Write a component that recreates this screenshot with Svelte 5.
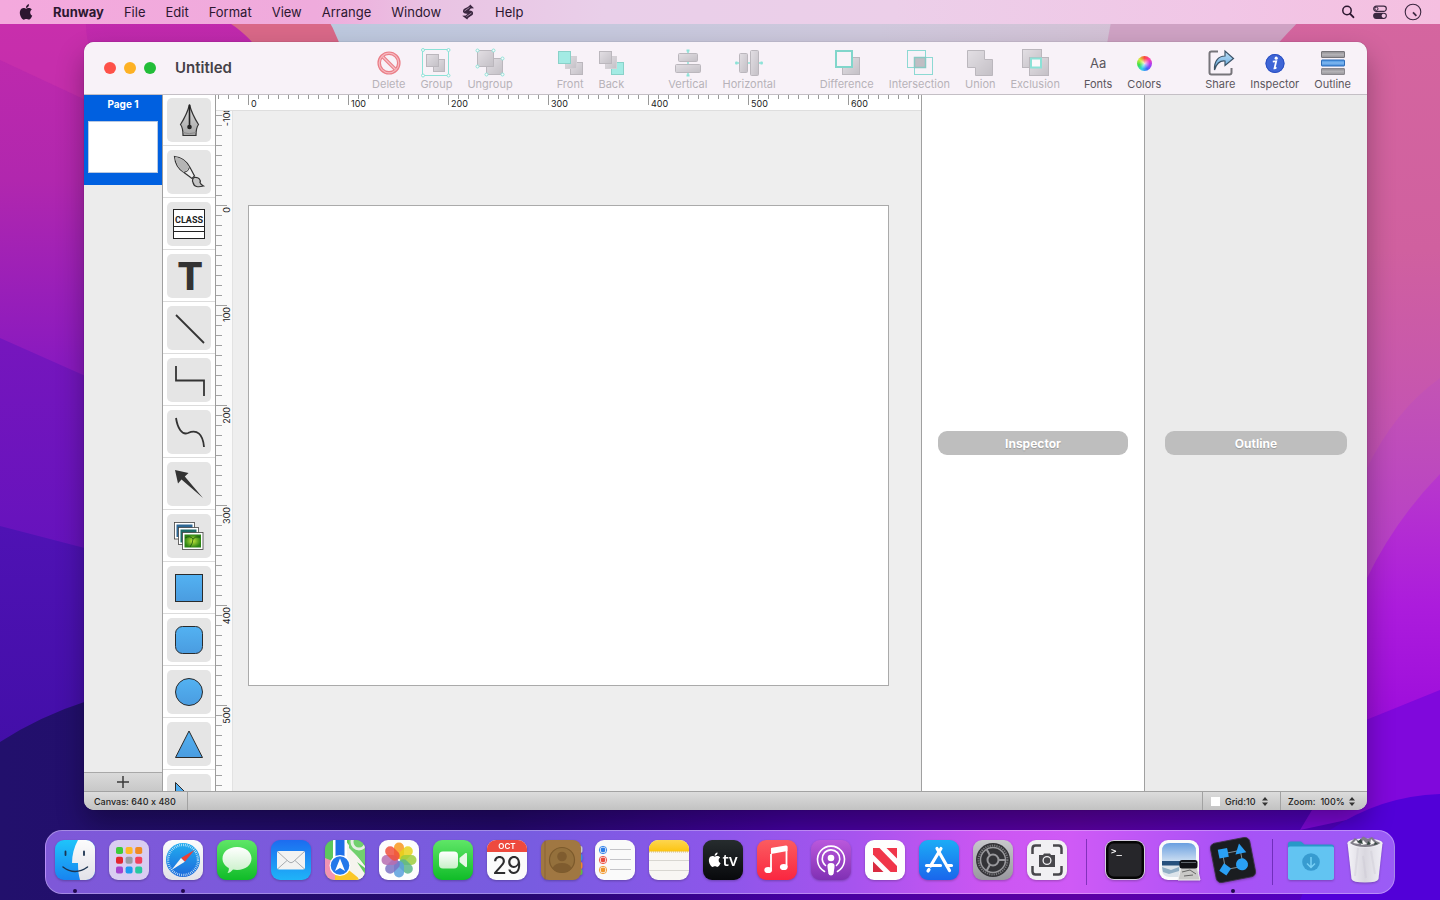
<script>
  const menus = ['File', 'Edit', 'Format', 'View', 'Arrange', 'Window'];

  const toolGroups = [
    { items: ['Delete', 'Group', 'Ungroup'], off: true },
    { items: ['Front', 'Back'], off: true },
    { items: ['Vertical', 'Horizontal'], off: true },
    { items: ['Difference', 'Intersection', 'Union', 'Exclusion'], off: true },
    { items: ['Fonts', 'Colors'], off: false, near: true },
    { items: ['Share', 'Inspector', 'Outline'], off: false }
  ];

  const tools = ['Pen', 'Brush', 'Class', 'Text', 'Line', 'Elbow', 'Curve', 'Arrow', 'Images', 'Rectangle', 'Rounded rectangle', 'Ellipse', 'Triangle', 'Right triangle'];

  let editorWidth = $state(705);
  let editorHeight = $state(680);
  const range = (from, to, step) => Array.from({ length: Math.max(0, Math.floor((to - from) / step) + 1) }, (_, i) => from + i * step);
  const hTicks = $derived(range(-30, editorWidth - 33, 10));
  const hLabels = $derived(range(0, editorWidth - 60, 100));
  const vTicks = $derived(range(-90, editorHeight - 95, 10));
  const vLabels = $derived(range(-100, editorHeight - 120, 100));

  const dock = [
    'Finder', 'Launchpad', 'Safari', 'Messages', 'Mail', 'Maps', 'Photos', 'FaceTime', 'Calendar', 'Contacts',
    'Reminders', 'Notes', 'TV', 'Music', 'Podcasts', 'News', 'App Store', 'System Preferences', 'Screenshot',
    '|', 'Terminal', 'Preview', 'Runway', '|', 'Downloads', 'Trash'
  ];
  const running = ['Finder', 'Safari', 'Runway'];

  const padColors = ['#3ecb3a', '#fdb827', '#f08a24', '#e3262f', '#9a9aa2', '#f2405c', '#a445cf', '#1d9bf0', '#27c8a0'];
  const petals = ['#f8981d', '#e8d21a', '#9ccc3c', '#5cb68a', '#5aa0dc', '#7b73c4', '#b66db0', '#f0503c'];
  const apple = 'M12.152 6.896c-.948 0-2.415-1.078-3.96-1.04-2.04.027-3.91 1.183-4.961 3.014-2.117 3.675-.546 9.103 1.519 12.09 1.013 1.454 2.208 3.09 3.792 3.039 1.52-.065 2.09-.987 3.935-.987 1.831 0 2.35.987 3.96.948 1.637-.026 2.676-1.48 3.676-2.948 1.156-1.688 1.636-3.325 1.662-3.415-.039-.013-3.182-1.221-3.22-4.857-.026-3.04 2.48-4.494 2.597-4.559-1.429-2.09-3.623-2.324-4.39-2.376-2-.156-3.675 1.09-4.61 1.09zM15.53 3.83c.843-1.012 1.4-2.427 1.245-3.83-1.207.052-2.662.805-3.532 1.818-.78.896-1.454 2.338-1.273 3.714 1.338.104 2.715-.688 3.559-1.701';

  let grid = $state(false);
</script>

<div class="desktop">
  <svg class="wallpaper" viewBox="0 0 1440 900" preserveAspectRatio="none" aria-hidden="true">
    <defs>
      <linearGradient id="wl" x1="0" y1="0" x2="0" y2="1">
        <stop offset="0" stop-color="#c32aac" /><stop offset=".2" stop-color="#b127ae" /><stop offset=".4" stop-color="#8a1abf" /><stop offset="1" stop-color="#5a10b8" />
      </linearGradient>
      <linearGradient id="wr" x1="0" y1="0" x2="0" y2="1">
        <stop offset="0" stop-color="#d5669f" /><stop offset=".5" stop-color="#d0609f" /><stop offset=".9" stop-color="#c352b4" /><stop offset="1" stop-color="#b848c0" />
      </linearGradient>
      <linearGradient id="wt" x1="0" y1="0" x2="1" y2="0">
        <stop offset="0" stop-color="#bcc8de" /><stop offset=".5" stop-color="#cfc8dc" /><stop offset="1" stop-color="#d8b8cc" />
      </linearGradient>
      <linearGradient id="wp" x1="0" y1="0" x2="0" y2="1">
        <stop offset="0" stop-color="#7616bd" /><stop offset="1" stop-color="#5a10bc" />
      </linearGradient>
      <linearGradient id="wi" x1="0" y1="0" x2="0" y2="1">
        <stop offset="0" stop-color="#4f12b4" /><stop offset="1" stop-color="#3a0ca0" />
      </linearGradient>
      <linearGradient id="wm" x1="0" y1="0" x2="0" y2="1">
        <stop offset="0" stop-color="#c354b4" /><stop offset=".7" stop-color="#b43acc" /><stop offset="1" stop-color="#ac2ed6" />
      </linearGradient>
      <linearGradient id="wn" x1="0" y1="0" x2="0" y2="1">
        <stop offset="0" stop-color="#b838cc" /><stop offset=".35" stop-color="#ac1cdc" /><stop offset=".6" stop-color="#a010dc" /><stop offset="1" stop-color="#8008e0" />
      </linearGradient>
      <linearGradient id="wb" x1="0" y1="0" x2="1" y2="0">
        <stop offset="0" stop-color="#22106c" /><stop offset=".35" stop-color="#24096e" /><stop offset=".55" stop-color="#4400a0" /><stop offset=".75" stop-color="#5c00a4" /><stop offset="1" stop-color="#4c00d0" />
      </linearGradient>
    </defs>
    <rect width="1440" height="900" fill="url(#wl)" />
    <path d="M0 0H90Q70 60 150 130L0 60Z" fill="#cf34ac" opacity=".5" />
    <path d="M170 0C230 15 250 35 265 60H400L320 0Z" fill="#d96888" />
    <path d="M315 0Q335 25 345 60H1440V0Z" fill="url(#wt)" />
    <path d="M1115 0L1104 60H1440V0Z" fill="#cfa2c4" />
    <path d="M1320 0C1290 30 1270 50 1240 90L1100 500H1440V0Z" fill="url(#wr)" />
    <path d="M0 338L90 378L300 500V700H0Z" fill="url(#wp)" />
    <path d="M0 526L100 552L400 700V900H0Z" fill="url(#wi)" />
    <path d="M1440 378Q1395 410 1366 470L1200 700H1440Z" fill="url(#wm)" />
    <path d="M1440 474Q1395 520 1366 580L1200 850H1440Z" fill="url(#wn)" />
    <path d="M0 742Q40 716 90 700L400 790H1440V900H0Z" fill="url(#wb)" />
    <path d="M1366 720L1440 690V800L1300 830Z" fill="#8008dc" />
    <path d="M1330 830Q1380 796 1440 794V900H1300Z" fill="#5200d8" />
  </svg>

  <nav class="menubar" aria-label="Menu bar">
    <button class="icon-btn" aria-label="Apple">
      <svg width="14" height="16" viewBox="1 0 22 24"><path d={apple} fill="#2c1730" /></svg>
    </button>
    <button class="app">Runway</button>
    {#each menus as m}<button>{m}</button>{/each}
    <button class="icon-btn" aria-label="Scripts">
      <svg width="14" height="16" viewBox="0 0 14 16"><path d="M9.200 .6L13 4.200 9.800 4.400 8 6.400C11.400 6.600 12.600 8 12 9.900 11.400 12 7.800 12.200 6.200 15.400L1.200 11.800 4.800 11.500 6.600 9.700C2.800 9.700 1.400 8.200 2.200 6.200 3 4 7.200 4 9.200 .6Z" fill="#3b2740" /><path d="M3.500 7L8.500 3.500M5.500 12.500L10.500 9" stroke="#e6c6e4" stroke-width=".6" fill="none" /></svg>
    </button>
    <button>Help</button>
    <span class="grow"></span>
    <div class="extras">
      <button class="icon-btn" aria-label="Search">
        <svg width="16" height="16" viewBox="0 0 16 16" fill="none" stroke="#2c1730" stroke-linecap="round"><circle cx="7" cy="6.500" r="4.200" stroke-width="1.500" /><path d="M10.200 9.800L13.400 13.200" stroke-width="1.900" /></svg>
      </button>
      <button class="icon-btn" aria-label="Control Center">
        <svg width="16" height="16" viewBox="0 0 16 16"><rect x="1.700" y="2.200" width="12.600" height="5.200" rx="2.600" fill="none" stroke="#3b2740" stroke-width="1.200" /><circle cx="4.400" cy="4.800" r="1.600" fill="none" stroke="#3b2740" /><rect x="1.100" y="8.700" width="13.800" height="6.200" rx="3.100" fill="#3b2740" /><circle cx="11.700" cy="11.800" r="2.100" fill="#f0c6e4" /></svg>
      </button>
      <button class="icon-btn" aria-label="Clock">
        <svg width="18" height="18" viewBox="0 0 18 18" fill="none" stroke="#3b2740"><circle cx="9" cy="9" r="7.800" stroke-width="1.100" /><path d="M9 9.300L12.400 12.800" stroke-width="1.700" /></svg>
      </button>
    </div>
  </nav>

  <main class="window">
    <header class="titlebar">
      <div class="lights">
        <button class="red" aria-label="Close"></button>
        <button class="yellow" aria-label="Minimize"></button>
        <button class="green" aria-label="Zoom window"></button>
      </div>
      <h1>Untitled</h1>
      <div class="toolbar">
        {#each toolGroups as g}
          <div class="group" class:near={g.near}>
            {#each g.items as t}
              <button class="tool" disabled={g.off}>
                {#if t === 'Fonts'}
                  <span class="aa">Aa</span>
                {:else if t === 'Colors'}
                  <span class="wheel"><i></i></span>
                {:else}
                  <svg width="30" height="30" viewBox="0 0 30 30" fill="none">
                    {#if t === 'Delete'}
                      <circle cx="15" cy="15" r="9.800" stroke="#e0202c" stroke-width="3.600" /><path d="M8.500 8.500L21.500 21.500" stroke="#e0202c" stroke-width="3.600" /><path d="M8.500 8.500L21.500 21.500" stroke="#f59aa0" stroke-width="1.200" /><circle cx="15" cy="15" r="9.800" stroke="#f58c94" stroke-width="1.200" />
                    {:else if t === 'Group'}
                      <rect x="1.500" y="1.500" width="26" height="26" stroke="#35d5bd" /><g fill="url(#gg)" stroke="#8b888e"><rect x="12.500" y="11.500" width="11" height="12" /><rect x="5.500" y="6.500" width="12" height="12" /></g>
                      <g fill="#fff" stroke="#35d5bd"><circle cx="2" cy="2" r="1.500" /><circle cx="27.500" cy="2" r="1.500" /><circle cx="2" cy="27.500" r="1.500" /><circle cx="27.500" cy="27.500" r="1.500" /></g>
                    {:else if t === 'Ungroup'}
                      <g fill="url(#gg)" stroke="#8b888e"><rect x="11.500" y="10.500" width="16" height="16" /><rect x="2.500" y="2.500" width="16" height="16" /></g>
                      <g fill="#fff" stroke="#35d5bd"><circle cx="2.500" cy="2.500" r="1.500" /><circle cx="18.500" cy="2.500" r="1.500" /><circle cx="2.500" cy="18.500" r="1.500" /><circle cx="27.500" cy="10.500" r="1.500" /><circle cx="27.500" cy="26.500" r="1.500" /><circle cx="11.500" cy="26.500" r="1.500" /></g>
                    {:else if t === 'Front'}
                      <g stroke="#8b888e" fill="url(#gg)"><rect x="15.500" y="14.500" width="12" height="12" /><rect x="10.500" y="8.500" width="11" height="12" stroke="#b8b5ba" /></g><rect x="3.500" y="3.500" width="12" height="12" fill="#5ee6d4" stroke="#2fb8a4" />
                    {:else if t === 'Back'}
                      <rect x="15.500" y="14.500" width="12" height="12" fill="#5ee6d4" stroke="#2fb8a4" /><g stroke="#8b888e" fill="url(#gg)"><rect x="9.500" y="8.500" width="11" height="12" stroke="#b8b5ba" /><rect x="3.500" y="3.500" width="12" height="12" /></g>
                    {:else if t === 'Vertical'}
                      <path d="M15 2V28" stroke="#35d5bd" stroke-width="1.500" /><path d="M13.500 2.500h3M13.500 27.500h3" stroke="#35d5bd" stroke-width="2" /><g fill="url(#gg)" stroke="#8b888e"><rect x="5.500" y="5.500" width="19" height="8" rx="1" /><rect x="2.500" y="16.500" width="25" height="8" rx="1" /></g>
                    {:else if t === 'Horizontal'}
                      <path d="M1 15H29" stroke="#35d5bd" stroke-width="1.500" /><path d="M2.500 13.500v3M27.500 13.500v3" stroke="#35d5bd" stroke-width="2" /><g fill="url(#gg)" stroke="#8b888e"><rect x="5.500" y="5.500" width="8" height="19" rx="1" /><rect x="16.500" y="2.500" width="8" height="25" rx="1" /></g>
                    {:else if t === 'Difference'}
                      <rect x="10.500" y="9.500" width="17" height="17" fill="url(#gg)" stroke="#8b888e" /><rect x="4" y="3" width="16" height="16" fill="#f8f4f8" stroke="#20c0a8" stroke-width="2" />
                    {:else if t === 'Intersection'}
                      <rect x="3.500" y="2.500" width="18" height="17" stroke="#35c5b5" /><rect x="10.500" y="9.500" width="18" height="17" stroke="#35c5b5" /><rect x="10.500" y="9.500" width="11" height="10" fill="#94949a" stroke="#2fa898" stroke-width="1.500" />
                    {:else if t === 'Union'}
                      <path d="M2.500 2.500H19.500V11.500H27.500V27.500H10.500V19.500H2.500Z" fill="url(#gg)" stroke="#8b888e" />
                    {:else if t === 'Exclusion'}
                      <rect x="2.500" y="1.500" width="19" height="18" fill="url(#gg)" stroke="#8b888e" /><rect x="9.500" y="9.500" width="19" height="18" fill="url(#gg)" stroke="#8b888e" /><rect x="11" y="10.500" width="10" height="9" fill="#fff" stroke="#35d5bd" stroke-width="2" />
                    {:else if t === 'Share'}
                      <path d="M13 3.500H6.500Q4.500 3.500 4.500 5.500V24.500Q4.500 26.500 6.500 26.500H24.500Q26.500 26.500 26.500 24.500V20" stroke="#77757a" stroke-width="2" /><path d="M9.500 22C9 12.500 14 8 20 8V3L28.500 10.500 20 17.500V13C15 12.500 11.500 15.500 9.500 22Z" fill="url(#gb)" stroke="#3d5468" stroke-width="1.200" />
                    {:else if t === 'Inspector'}
                      <circle cx="15" cy="15.500" r="9.500" fill="#3f66d6" /><circle cx="15" cy="15.500" r="9" stroke="#2b4fc0" /><circle cx="16.200" cy="10.200" r="1.600" fill="#fff" /><path d="M12.800 13.600L16.200 13.200 14.500 20.300Q15.300 20.300 16.400 19.300" stroke="#fff" stroke-width="1.800" />
                    {:else}
                      <rect x="3.500" y="3.500" width="23" height="6" rx=".5" fill="url(#gd)" stroke="#77757a" /><rect x="3.500" y="12" width="23" height="6" rx=".5" fill="url(#gc)" stroke="#2f6cb8" /><rect x="3.500" y="20.500" width="23" height="6" rx=".5" fill="url(#gd)" stroke="#8b888e" />
                    {/if}
                  </svg>
                {/if}
                <span class="cap">{t}</span>
              </button>
            {/each}
          </div>
        {/each}
      </div>
    </header>

    <div class="body">
      <section class="pages" aria-label="Pages">
        <button class="page-item">
          <span>Page 1</span>
          <span class="thumb"></span>
        </button>
        <button class="add" aria-label="Add page">
          <svg width="12" height="12" viewBox="0 0 12 12"><path d="M6 0V12M0 6H12" stroke="#3a3a3a" stroke-width="1.500" /></svg>
        </button>
      </section>

      <ul class="toolbox" aria-label="Tools">
        {#each tools as t}
          <li>
            <button aria-label={t}>
              <svg width="44" height="44" viewBox="0 0 44 44" fill="none">
                {#if t === 'Pen'}
                  <path d="M22.500 6.500C24.500 15 28 21 31.500 26.500 29.200 29.500 29 33 29 37.500H16C16 33 15.800 29.500 13.500 26.500 17 21 20.500 15 22.500 6.500Z" fill="url(#gp)" stroke="#333" stroke-width="1.200" /><path d="M22.500 7V28" stroke="#222" stroke-width="1.600" /><circle cx="22.500" cy="29" r="2.300" fill="#222" /><path d="M16 34.500Q22 37 29 34.500" stroke="#888" />
                {:else if t === 'Brush'}
                  <path d="M7.500 6.500C15 7 20 12 23 17.500L27.500 26 25 28.500 17 22.500C11 19 8 13 7.500 6.500Z" fill="#ededed" stroke="#333" stroke-width="1.200" /><path d="M8 7C15 8 19 12 22.500 17.500L17 22.500C11 18 9 13 8 7Z" fill="#b5b5b5" /><path d="M22.500 17.500Q21.500 21.500 17 22.500" stroke="#333" /><path d="M27.500 27.500C32 27 34 30 33 32.500 34 35 35.500 35.500 36.500 36 31 37.500 27 37 26 32.500 25 31 25.500 28 27.500 27.500Z" fill="#c4c4c4" stroke="#333" stroke-width="1.200" />
                {:else if t === 'Class'}
                  <rect x="6.500" y="7.500" width="31" height="29" fill="#fff" stroke="#222" /><path d="M6 24.500H38M6 29.500H38" stroke="#222" /><text x="22" y="21" class="cls">CLASS</text>
                {:else if t === 'Text'}
                  <text x="23" y="36" class="bigt">T</text>
                {:else if t === 'Line'}
                  <path d="M9 9L37 37" stroke="#333" stroke-width="1.800" />
                {:else if t === 'Elbow'}
                  <path d="M9 8V22.500H37V38" stroke="#333" stroke-width="1.800" />
                {:else if t === 'Curve'}
                  <path d="M9 8C10.500 18 15 25.500 21 23 30 19 36 24 37 37" stroke="#333" stroke-width="1.800" />
                {:else if t === 'Arrow'}
                  <path d="M8 8L21.500 11 17.800 14.400 36 36 14.500 17.600 11 21.500Z" fill="#333" />
                {:else if t === 'Images'}
                  <g stroke="#444" stroke-width=".8" fill="#fff"><rect x="7.500" y="8.500" width="20" height="16.500" /></g><rect x="9.500" y="10.500" width="16" height="12.500" fill="#2d6794" />
                  <rect x="11.500" y="13.500" width="20" height="17" stroke="#444" stroke-width=".8" fill="#fff" /><rect x="13.500" y="15.500" width="16" height="13" fill="#1d6a68" />
                  <rect x="15.500" y="18.500" width="20.500" height="17" stroke="#444" stroke-width=".8" fill="#fff" /><rect x="17.500" y="20.500" width="16.500" height="13" fill="url(#gl)" /><path d="M18 24Q23 21 26 25 28 22 33 23M23 33Q26 29 26 25" stroke="#1c5210" stroke-width=".8" />
                {:else if t === 'Rectangle'}
                  <rect x="8.500" y="8.500" width="27" height="27" fill="url(#gs)" stroke="#2b2b2b" />
                {:else if t === 'Rounded rectangle'}
                  <rect x="8.500" y="8.500" width="27" height="27" rx="7" fill="url(#gs)" stroke="#2b2b2b" />
                {:else if t === 'Ellipse'}
                  <circle cx="22" cy="22" r="13.500" fill="url(#gs)" stroke="#2b2b2b" />
                {:else if t === 'Triangle'}
                  <path d="M22 9L35.500 35.500H8.500Z" fill="url(#gs)" stroke="#2b2b2b" />
                {:else}
                  <path d="M8.500 8.500L35.500 35.500H8.500Z" fill="url(#gs)" stroke="#2b2b2b" />
                {/if}
              </svg>
            </button>
          </li>
        {/each}
      </ul>

      <section class="editor" aria-label="Canvas" bind:clientWidth={editorWidth}>
        <svg class="ruler-h" aria-hidden="true">
          {#each hTicks as v}
            <rect x={v + 32} y="0" width="1" height={v % 100 === 0 ? 10 : 4} fill="#999" />
          {/each}
          {#each hLabels as v}<text x={v + 35} y="12">{v}</text>{/each}
        </svg>
        <div class="lower" bind:clientHeight={editorHeight}>
          <svg class="ruler-v" aria-hidden="true">
            {#each vTicks as v}
              <rect x="0" y={v + 94} width={v % 100 === 0 ? 11 : 6} height="1" fill="#a2a2a2" />
            {/each}
            {#each vLabels as v}
              <text transform={`translate(14 ${v + 96}) rotate(-90)`} text-anchor="end">{v}</text>
            {/each}
          </svg>
          <div class="scroll"><div class="sheet"></div></div>
        </div>
      </section>

      <aside class="panel inspector"><button>Inspector</button></aside>
      <aside class="panel outline"><button>Outline</button></aside>
    </div>

    <footer class="status">
      <span class="info">Canvas: 640 x 480</span>
      <span class="grow"></span>
      <div class="cell">
        <input id="grid" type="checkbox" bind:checked={grid} />
        <label for="grid">Grid:</label>
        <select aria-label="Grid size"><option>10</option><option>20</option></select>
        <svg width="6" height="9" viewBox="0 0 6 9"><path d="M3 0L6 3.500H0ZM3 9L6 5.500H0Z" fill="#333" /></svg>
      </div>
      <div class="cell zoom">
        <label for="zoom">Zoom:</label>
        <select id="zoom"><option>100%</option><option>75%</option></select>
        <svg width="6" height="9" viewBox="0 0 6 9"><path d="M3 0L6 3.500H0ZM3 9L6 5.500H0Z" fill="#333" /></svg>
      </div>
    </footer>
  </main>

  <nav class="dock" aria-label="Dock">
    {#each dock as d}
      {#if d === '|'}
        <span class="sep"></span>
      {:else}
        <button aria-label={d} class:running={running.includes(d)}>
          <svg width="48" height="48" viewBox="0 0 48 48" fill="none">
            {#if d === 'Finder'}
              <rect x="4" y="4" width="40" height="40" rx="9" fill="url(#fl)" /><path d="M27 4C23 11 21 19 21 27H27C27 33 27.500 39 29 44H35A9 9 0 0 0 44 35V13A9 9 0 0 0 35 4Z" fill="url(#fw)" /><path d="M14.500 15.500V19M33 15.500V19" stroke="#1c3450" stroke-width="1.800" stroke-linecap="round" /><path d="M12 31Q24 40 36.500 31" stroke="#1c3450" stroke-width="1.500" stroke-linecap="round" />
            {:else if d === 'Launchpad'}
              <rect x="4" y="4" width="40" height="40" rx="9" fill="#d9cdf1" />
              {#each padColors as c, i}<rect x={11 + (i % 3) * 9.6} y={11 + Math.floor(i / 3) * 9.8} width="7" height="7" rx="1.800" fill={c} />{/each}
            {:else if d === 'Safari'}
              <rect x="4" y="4" width="40" height="40" rx="9" fill="url(#fw)" /><circle cx="24" cy="24" r="17" fill="url(#sf)" /><circle cx="24" cy="24" r="15" stroke="#d8edfb" stroke-width="2.400" stroke-dasharray=".7 1.200" /><path d="M35.500 14L25.800 25.800 22 22Z" fill="#ee4034" /><path d="M12.500 34L22 22 25.800 25.800Z" fill="#f4f4f4" />
            {:else if d === 'Messages'}
              <rect x="4" y="4" width="40" height="40" rx="9" fill="url(#gr)" /><path d="M24 11C32.500 11 38.500 16 38.500 22.500S32.500 34 24 34C22.500 34 21.500 33.800 20 33.500 18.500 35.500 16.500 36.800 14.500 37 15.500 35.500 16 34 15.800 32 12 30 9.500 26.500 9.500 22.500 9.500 16 15.500 11 24 11Z" fill="url(#wg)" />
            {:else if d === 'Mail'}
              <rect x="4" y="4" width="40" height="40" rx="9" fill="url(#ml)" /><rect x="10" y="15" width="28" height="18.500" rx="2" fill="#f2f2f2" /><path d="M10.500 15.500L22 26Q24 27.500 26 26L37.500 15.500M10.500 33L20 24.500M37.500 33L28 24.500" stroke="#a0a4a8" stroke-width=".9" />
            {:else if d === 'Maps'}
              <rect x="4" y="4" width="40" height="40" rx="9" fill="#5cc85c" /><g clip-path="url(#rr)"><path d="M24 4L44 30V44H30L22 28Z" fill="#f6f4ee" /><path d="M28 4V12L44 28V4Z" fill="#72d06e" /><circle cx="38" cy="6" r="7" stroke="#e6efe4" stroke-width="3" /><path d="M4 22L14 26V44H4Z" fill="#f293b2" /><path d="M14 30H32L38 44H14Z" fill="#fbc728" /><path d="M12 4H26V32H12Z" fill="#fff" /><path d="M14.500 4H23.500V28H14.500Z" fill="#1d6fe8" /><path d="M26 24L44 38V44H40L24 31Z" fill="#f6f4ee" /><path d="M36 26L44 32V38Z" fill="#62c860" /></g><circle cx="19" cy="29.500" r="10.500" fill="#fff" /><circle cx="19" cy="29.500" r="9.300" fill="#2478ea" /><path d="M19 22.500L24 35 19 32 14 35Z" fill="#fff" />
            {:else if d === 'Photos'}
              <rect x="4" y="4" width="40" height="40" rx="9" fill="#fdfdfd" />
              {#each petals as c, i}<rect x="19" y="6.500" width="10" height="16.500" rx="5" fill={c} opacity=".85" transform={`rotate(${i * 45} 24 24)`} />{/each}
            {:else if d === 'FaceTime'}
              <rect x="4" y="4" width="40" height="40" rx="9" fill="url(#gr)" /><rect x="10" y="15.500" width="19" height="17" rx="4" fill="url(#wg)" /><path d="M30.500 22L36.500 17Q38 16.500 38 18V30Q38 31.500 36.500 31L30.500 26Z" fill="#e6f8e6" />
            {:else if d === 'Calendar'}
              <rect x="4" y="4" width="40" height="40" rx="9" fill="#fbfbfb" /><path d="M4 16V13A9 9 0 0 1 13 4H35A9 9 0 0 1 44 13V16Z" fill="#ee4a3e" /><text x="24" y="13" class="oct">OCT</text><text x="24" y="38" class="day">29</text>
            {:else if d === 'Contacts'}
              <g><rect x="38" y="10" width="7.500" height="7" rx="2" fill="#c8c8c8" /><rect x="38" y="18" width="7.500" height="7" rx="2" fill="#3b8fe0" /><rect x="38" y="26" width="7.500" height="7" rx="2" fill="#f0862a" /><rect x="38" y="33" width="7.500" height="6" rx="2" fill="#5dbb46" /></g><rect x="4" y="4" width="40" height="40" rx="8" fill="#a07742" /><path d="M8 4.500V43.500" stroke="#8a6434" /><circle cx="25" cy="24" r="12.500" stroke="#7c5a2c" stroke-width="1.200" fill="#94703c" /><circle cx="25" cy="20.500" r="4.800" fill="#7f5c2f" /><path d="M15.500 32Q18 27 25 27T34.500 32Q31 36.500 25 36.500T15.500 32Z" fill="#7f5c2f" />
            {:else if d === 'Reminders'}
              <rect x="4" y="4" width="40" height="40" rx="9" fill="#fafafa" />
              {#each ['#2b7de8', '#ea4b3c', '#f0962a'] as c, i}<circle cx="12" cy={14 + i * 10} r="3.700" stroke={c} stroke-width=".9" /><circle cx="12" cy={14 + i * 10} r="2.400" fill={c} /><path d={`M19 ${13.5 + i * 10}H40`} stroke="#c4c4c8" />{/each}
            {:else if d === 'Notes'}
              <rect x="4" y="4" width="40" height="40" rx="9" fill="#f8f6f3" /><path d="M4 15.500V13A9 9 0 0 1 13 4H35A9 9 0 0 1 44 13V15.500Z" fill="url(#yl)" /><path d="M4 16H44" stroke="#b99a50" stroke-dasharray=".8 1.200" stroke-width=".8" /><path d="M4 24.500H44M4 34.500H44" stroke="#d8d6d1" />
            {:else if d === 'TV'}
              <rect x="4" y="4" width="40" height="40" rx="9" fill="url(#bk)" /><g transform="translate(8.500 16.500) scale(.6)"><path d={apple} fill="#fff" /></g><text x="31" y="30" class="tv">tv</text>
            {:else if d === 'Music'}
              <rect x="4" y="4" width="40" height="40" rx="9" fill="url(#mu)" /><path d="M18 15L33.500 11.500V31" stroke="#fff" stroke-width="1.800" /><path d="M18 33V12.500Q18 12 19 11.800L33 9.500Q34.400 9.300 34.400 11V15L18 18Z" fill="#fff" /><path d="M18 18V33" stroke="#fff" stroke-width="1.800" /><ellipse cx="15.200" cy="34" rx="3.900" ry="3.100" fill="#fff" /><ellipse cx="30.800" cy="31" rx="3.900" ry="3.100" fill="#fff" />
            {:else if d === 'Podcasts'}
              <rect x="4" y="4" width="40" height="40" rx="9" fill="url(#po)" /><g stroke="#fff" stroke-width="1.600" stroke-linecap="round"><path d="M17.500 35.500A13.500 13.500 0 1 1 30.500 35.500" /><path d="M18.500 29.500A8.800 8.800 0 1 1 29.500 29.500" /></g><circle cx="24" cy="22" r="3.300" fill="#fff" /><path d="M24 27C27 27 27.800 28.500 27.500 31L26.600 37.500Q26.200 39.500 24 39.500T21.400 37.500L20.500 31C20.200 28.500 21 27 24 27Z" fill="#fff" />
            {:else if d === 'News'}
              <rect x="4" y="4" width="40" height="40" rx="9" fill="#fefefe" /><path d="M12 12H18.500L36 30V36H29.500L12 18.500Z" fill="#f0364a" /><path d="M25.500 12H36V22.500Z" fill="#f0364a" /><path d="M12 25.500V36H22.500Z" fill="#d92a40" />
            {:else if d === 'App Store'}
              <rect x="4" y="4" width="40" height="40" rx="9" fill="url(#as)" /><g stroke="#fff" stroke-width="3.200" stroke-linecap="round"><path d="M26 12.500L15.500 30M22 12.500L34.500 34.500M11.500 29.500H25.500M31.500 29.500H36.500M14 33.500L13 35" /></g>
            {:else if d === 'System Preferences'}
              <rect x="4" y="4" width="40" height="40" rx="9" fill="url(#sp)" /><circle cx="24" cy="24" r="17" fill="#333337" /><circle cx="24" cy="24" r="14.500" stroke="#77777b" stroke-width="2" stroke-dasharray="1.300 1" /><circle cx="24" cy="24" r="12.500" stroke="#98989c" stroke-width="1.500" /><circle cx="24" cy="24" r="5.500" stroke="#98989c" stroke-width="2" /><path d="M29.500 24H37M21 19.500L17.500 13M21 28.500L17.500 35" stroke="#98989c" stroke-width="2" />
            {:else if d === 'Screenshot'}
              <rect x="4" y="4" width="40" height="40" rx="9" fill="#f1f0f3" /><path d="M9.500 18V12.500Q9.500 9.500 12.500 9.500H18M30 9.500H35.500Q38.500 9.500 38.500 12.500V18M38.500 30V35.500Q38.500 38.500 35.500 38.500H30M18 38.500H12.500Q9.500 38.500 9.500 35.500V30" stroke="#48474c" stroke-width="2.500" /><path d="M16 19H20L21 17.500H27L28 19H32V31H16Z" fill="#48474c" /><circle cx="24" cy="24.500" r="3.900" fill="#48474c" stroke="#f1f0f3" stroke-width="1.300" />
            {:else if d === 'Terminal'}
              <rect x="4" y="4" width="40" height="40" rx="9" fill="#d4cede" /><rect x="5" y="5" width="38" height="38" rx="8" fill="#050505" /><rect x="7.500" y="7.500" width="33" height="33" rx="5" fill="#26262a" /><text x="10" y="18" class="term">&gt;_</text>
            {:else if d === 'Preview'}
              <rect x="4" y="4" width="40" height="40" rx="9" fill="#fbfbfb" /><path d="M7 15Q7 7 15 7H33Q41 7 41 15V26H7Z" fill="url(#sk)" /><path d="M7 25H41V30H7Z" fill="#26507c" /><path d="M7 29.500H41V33Q41 41 33 41H15Q7 41 7 33Z" fill="#dce4ea" /><path d="M7 31L16 34 24 31V35L14 38 8 36Z" fill="#90aec4" /><path d="M26 31H42L45 44H23Z" fill="#c9c9c7" stroke="#efefef" /><path d="M27 36L35 34 41 38M29 40L38 39" stroke="#666" /><rect x="24.500" y="24" width="18" height="8.500" rx="2.500" fill="#101216" /><path d="M26 26.500H41" stroke="#5f666c" />
            {:else if d === 'Runway'}
              <g transform="rotate(-11 24 24)"><rect x="4" y="4" width="40" height="40" rx="5" fill="#1a1d20" stroke="#3a3144" stroke-width=".8" /><path d="M15 16L33 16 33 32 15 32Z" stroke="#7a8a94" /><rect x="11" y="11" width="9.500" height="9" fill="#2aa0f4" /><path d="M33 9L38.500 19H27.500Z" fill="#2aa0f4" /><path d="M14.500 25.500L20.500 32 14.500 38 8.500 32Z" fill="#2aa0f4" /><circle cx="32" cy="30" r="6" fill="#2aa0f4" /></g>
            {:else if d === 'Downloads'}
              <path d="M1 8Q1 5.500 3.500 5.500H14L17.500 8.500H44.500Q47 8.500 47 11V20H1Z" fill="#2898c8" /><path d="M1 12Q1 10.500 3 10.500H45Q47 10.500 47 12V41.500Q47 44 44.500 44H3.500Q1 44 1 41.500Z" fill="#62c4f2" /><circle cx="24" cy="26" r="8.800" fill="#379bd0" /><path d="M24 21V31M20 27.500L24 31.500 28 27.500" stroke="#77d0f6" stroke-width="1.500" />
            {:else}
              <path d="M6.500 7H41.500L37.500 43Q36.500 46.500 24 46.500T10.500 43Z" fill="url(#tr)" /><path d="M17 12L14 40M30 15L34 38M22 20L25 42" stroke="#c8c6d0" stroke-width="2" opacity=".35" /><ellipse cx="24" cy="7" rx="17.500" ry="4.500" fill="#efeef4" /><path d="M9 7L14 2 18 5 22 0.500 27 3 31 1 35 5 39.500 7Q34 11 24 11T9 7Z" fill="#807d88" /><path d="M12 7L15 4 18 8ZM22 4L26 8 20 9ZM30 3L34 7 29 9Z" fill="#f7f7f7" /><path d="M16 6L20 3 22 8ZM27 5L30 8 26 9ZM34 6L37 8 33 9Z" fill="#33463f" />
            {/if}
          </svg>
        </button>
      {/if}
    {/each}
  </nav>

  <svg class="defs" aria-hidden="true">
    <defs>
      <linearGradient id="gg" x1="0" y1="0" x2="1" y2="1"><stop stop-color="#d2d0d4" /><stop offset="1" stop-color="#9a989e" /></linearGradient>
      <linearGradient id="gb" x1="0" y1="0" x2="0" y2="1"><stop stop-color="#c0e2f8" /><stop offset="1" stop-color="#5aa2da" /></linearGradient>
      <linearGradient id="gc" x1="0" y1="0" x2="0" y2="1"><stop stop-color="#3f8ee0" /><stop offset=".5" stop-color="#82b8f0" /><stop offset="1" stop-color="#3f88da" /></linearGradient>
      <linearGradient id="gd" x1="0" y1="0" x2="0" y2="1"><stop stop-color="#8d8b90" /><stop offset=".5" stop-color="#b4b2b6" /><stop offset="1" stop-color="#97959a" /></linearGradient>
      <linearGradient id="gp" x1="0" y1="0" x2="0" y2="1"><stop stop-color="#dedede" /><stop offset="1" stop-color="#a4a4a4" /></linearGradient>
      <linearGradient id="gs" x1="0" y1="0" x2="0" y2="1"><stop stop-color="#53b2f2" /><stop offset="1" stop-color="#4a9ce0" /></linearGradient>
      <radialGradient id="gl"><stop stop-color="#c4e83c" /><stop offset="1" stop-color="#2c8414" /></radialGradient>
      <linearGradient id="fl" x1="0" y1="0" x2="0" y2="1"><stop stop-color="#1fc4fa" /><stop offset="1" stop-color="#1884f0" /></linearGradient>
      <linearGradient id="fw" x1="0" y1="0" x2="0" y2="1"><stop stop-color="#fcfcfc" /><stop offset="1" stop-color="#e2e2e8" /></linearGradient>
      <linearGradient id="sf" x1="0" y1="0" x2="0" y2="1"><stop stop-color="#22aef0" /><stop offset="1" stop-color="#1c68da" /></linearGradient>
      <linearGradient id="gr" x1="0" y1="0" x2="0" y2="1"><stop stop-color="#5fe667" /><stop offset="1" stop-color="#10bc28" /></linearGradient>
      <linearGradient id="wg" x1="0" y1="0" x2="0" y2="1"><stop stop-color="#fff" /><stop offset="1" stop-color="#c8f0c8" /></linearGradient>
      <linearGradient id="ml" x1="0" y1="0" x2="0" y2="1"><stop stop-color="#1c6cf0" /><stop offset="1" stop-color="#1fb4f8" /></linearGradient>
      <linearGradient id="yl" x1="0" y1="0" x2="0" y2="1"><stop stop-color="#fdd650" /><stop offset="1" stop-color="#fcc410" /></linearGradient>
      <linearGradient id="bk" x1="0" y1="0" x2="0" y2="1"><stop stop-color="#262c2e" /><stop offset="1" stop-color="#08090c" /></linearGradient>
      <linearGradient id="mu" x1="0" y1="0" x2="0" y2="1"><stop stop-color="#fb5c60" /><stop offset="1" stop-color="#fa2640" /></linearGradient>
      <linearGradient id="po" x1="0" y1="0" x2="0" y2="1"><stop stop-color="#ba58dc" /><stop offset="1" stop-color="#8030b4" /></linearGradient>
      <linearGradient id="as" x1="0" y1="0" x2="0" y2="1"><stop stop-color="#1cacf6" /><stop offset="1" stop-color="#1a66ec" /></linearGradient>
      <linearGradient id="sp" x1="0" y1="0" x2="0" y2="1"><stop stop-color="#c8c8cc" /><stop offset="1" stop-color="#98989e" /></linearGradient>
      <linearGradient id="sk" x1="0" y1="0" x2="0" y2="1"><stop stop-color="#6a9fe0" /><stop offset="1" stop-color="#cfe0f2" /></linearGradient>
      <linearGradient id="tr" x1="0" y1="0" x2="1" y2="0"><stop stop-color="#f4f3f8" /><stop offset=".5" stop-color="#d9d7df" /><stop offset="1" stop-color="#f0eff5" /></linearGradient>
      <clipPath id="rr"><rect x="4" y="4" width="40" height="40" rx="9" /></clipPath>
    </defs>
  </svg>
</div>

<style>
  :global(body) { overflow: hidden; }
  button, select, input { font: inherit; color: inherit; border: 0; padding: 0; margin: 0; background: none; }
  svg { display: block; }
  .grow { flex: 1; }
  .defs { position: absolute; width: 0; height: 0; }
  .desktop {
    position: relative; isolation: isolate; box-sizing: border-box; height: 100vh; padding-bottom: 6px;
    display: flex; flex-direction: column; font-family: Inter, "Liberation Sans", sans-serif; font-feature-settings: "calt" 0;
  }
  .wallpaper { position: absolute; inset: 0; width: 100%; height: 100%; z-index: -1; }

  .menubar {
    display: flex; align-items: center; gap: 20px; height: 24px; flex: none; padding: 0 18px 0 19px; font-size: 13px; color: #2c1730;
    background: linear-gradient(90deg, #f4a9dd, #efabdc 22%, #e9c3e3 30%, #e9cfe9 42%, #eccfe9 62%, #f1c6e6 85%, #f5bfe0);
  }
  .app { font-weight: 700; }
  .extras { display: flex; align-items: center; gap: 16px; }

  .window {
    flex: 1; min-height: 0; display: flex; flex-direction: column; margin: 18px 73px 20px 84px;
    border-radius: 10px; overflow: hidden; background: #ececec;
    box-shadow: 0 0 1px rgba(0, 0, 0, .5), 0 14px 28px rgba(0, 0, 0, .32);
  }
  .titlebar {
    display: flex; align-items: center; flex: none; height: 52px; padding: 0 16px 0 20px;
    background: #f8f2f8; border-bottom: 1px solid #c4bfc5;
  }
  .lights { display: flex; gap: 8px; }
  .lights button { width: 12px; height: 12px; border-radius: 50%; }
  .red { background: #fe5149; }
  .yellow { background: #fdb124; }
  .green { background: #22bd38; }
  h1 { flex: 1; margin: 0 0 0 19px; font-size: 15px; line-height: 18px; font-weight: 600; color: #454147; }
  .toolbar { display: flex; gap: 44px; padding-top: 2px; }
  .group { display: flex; gap: 15px; }
  .near { margin-left: -20px; }
  .tool { display: flex; flex-direction: column; align-items: center; font-size: 11px; line-height: 12px; color: #5b565d; }
  .tool svg { margin: 0 -4px; }
  .tool:disabled { color: #b7b2b9; }
  .tool:disabled svg { opacity: .55; }
  .aa { height: 30px; line-height: 30px; font-size: 13px; }
  .wheel { height: 30px; display: flex; align-items: center; }
  .wheel i { width: 15px; height: 15px; border-radius: 50%; background: radial-gradient(rgba(255, 255, 255, .8), transparent 50%), conic-gradient(#fb4d3c, #fb3fb0, #a83cf5, #3f68fa, #33d3e8, #3ae04a, #d5ec3c, #fb4d3c); }

  .body { flex: 1; min-height: 0; display: grid; grid-template-columns: 78px 53px minmax(0, 1fr) 223px 223px; }
  .pages { display: flex; flex-direction: column; justify-content: space-between; }
  .page-item {
    display: flex; flex-direction: column; gap: 10px; padding: 2px 4px 12px; background: #0060e0; color: #fff;
    font-size: 10px; font-weight: 700; line-height: 14px; text-align: center;
  }
  .thumb { height: 52px; background: #fff; box-sizing: border-box; border: 1px solid #b8c8e0; }
  .add { display: flex; justify-content: center; align-items: center; height: 19px; border-top: 1px solid #a8a8a8; background: linear-gradient(#dadada, #c8c8c8); }
  .toolbox { margin: 0; padding: 3px 3px 0 4px; list-style: none; overflow: hidden; min-height: 0; background: #fff; border-left: 1px solid #a0a0a0; }
  .toolbox li { margin: 0 -3px 4px -4px; padding: 0 3px 3px 4px; border-bottom: 1px solid #dcdcdc; }
  .toolbox button { display: block; width: 44px; height: 44px; border-radius: 5px; background: #e5e5e5; }
  .cls { font: 700 9px Roboto, "Liberation Sans", sans-serif; text-anchor: middle; fill: #222; }
  .bigt { font: 800 38px Inter, "Liberation Sans", sans-serif; text-anchor: middle; fill: #333; }

  .editor { display: flex; flex-direction: column; min-width: 0; min-height: 0; border-left: 1px solid #9c9c9c; }
  .ruler-h { flex: none; width: 100%; height: 15px; background: #fff; border-bottom: 1px solid #dedede; font-size: 9px; }
  .lower { flex: 1; min-height: 0; display: flex; overflow: hidden; }
  .ruler-v { flex: none; width: 16px; height: 100%; background: #fafafa; border-right: 1px solid #e2e2e2; font-size: 9px; }
  .ruler-h text, .ruler-v text { fill: #222; }
  .scroll { flex: 1; min-width: 0; overflow: hidden; padding: 94px 0 0 15px; background: #eee; }
  .sheet { width: 639px; height: 479px; background: #fff; border: 1px solid #aaa; }

  .panel { display: flex; align-items: center; border-left: 1px solid #a0a0a0; }
  .panel button { flex: 1; height: 24px; border-radius: 9px; background: #bebebe; color: #fff; font-size: 12px; font-weight: 700; text-shadow: 0 1px 1px rgba(0, 0, 0, .2); }
  .inspector { background: #fff; padding: 0 16px; }
  .outline { background: #ebebeb; padding: 0 20px; }

  .status {
    display: flex; flex: none; height: 18px; line-height: 19px; border-top: 1px solid #a2a2a2; font-size: 9px; font-weight: 500; color: #1e1e1e;
    background: linear-gradient(#dcdcdc, #c2c2c2);
  }
  .info { padding: 0 11px 0 10px; border-right: 1px solid #a2a2a2; }
  .cell { display: flex; align-items: center; box-sizing: border-box; width: 78px; padding-left: 8px; border-left: 1px solid #a2a2a2; }
  .zoom { width: 87px; padding-left: 7px; }
  .cell input { appearance: none; width: 9px; height: 9px; margin-right: 5px; background: #fff; }
  .cell input:checked { background: #0060e0; }
  .cell select { appearance: none; }
  .cell svg { margin-left: 4px; }
  .zoom select { margin-left: 5px; }

  .dock {
    align-self: center; display: flex; flex: none; box-sizing: border-box; height: 64px; padding: 0 2px; border: 1px solid rgba(255, 255, 255, .3); border-radius: 17px;
    background: linear-gradient(90deg, #7e58d8, #785ce0 36%, #8d56ea 50%, #a754ee 60%, #cc56f2 70%, #cf5af6 76%, #a852f6 88%, #9a5cf6);
  }
  .dock button { position: relative; width: 54px; padding: 5px 3px 0; display: flex; align-items: flex-start; }
  .dock svg { overflow: visible; filter: drop-shadow(0 1px 1px rgba(0, 0, 0, .25)); }
  .running::after { content: ""; position: absolute; left: 25px; bottom: 0; width: 4px; height: 4px; border-radius: 50%; background: #21084f; }
  .sep { width: 1px; margin: 8px 11px 8px 12px; background: rgba(60, 10, 130, .5); }
  .oct { font: 600 8px Inter, sans-serif; text-anchor: middle; fill: #fff; }
  .day { font: 400 24px Inter, sans-serif; text-anchor: middle; fill: #2c2c2e; }
  .tv { font: 600 16px "Open Sans", Inter, sans-serif; text-anchor: middle; fill: #fff; }
  .term { font: 700 9px "DejaVu Sans Mono", monospace; fill: #fff; }
</style>
